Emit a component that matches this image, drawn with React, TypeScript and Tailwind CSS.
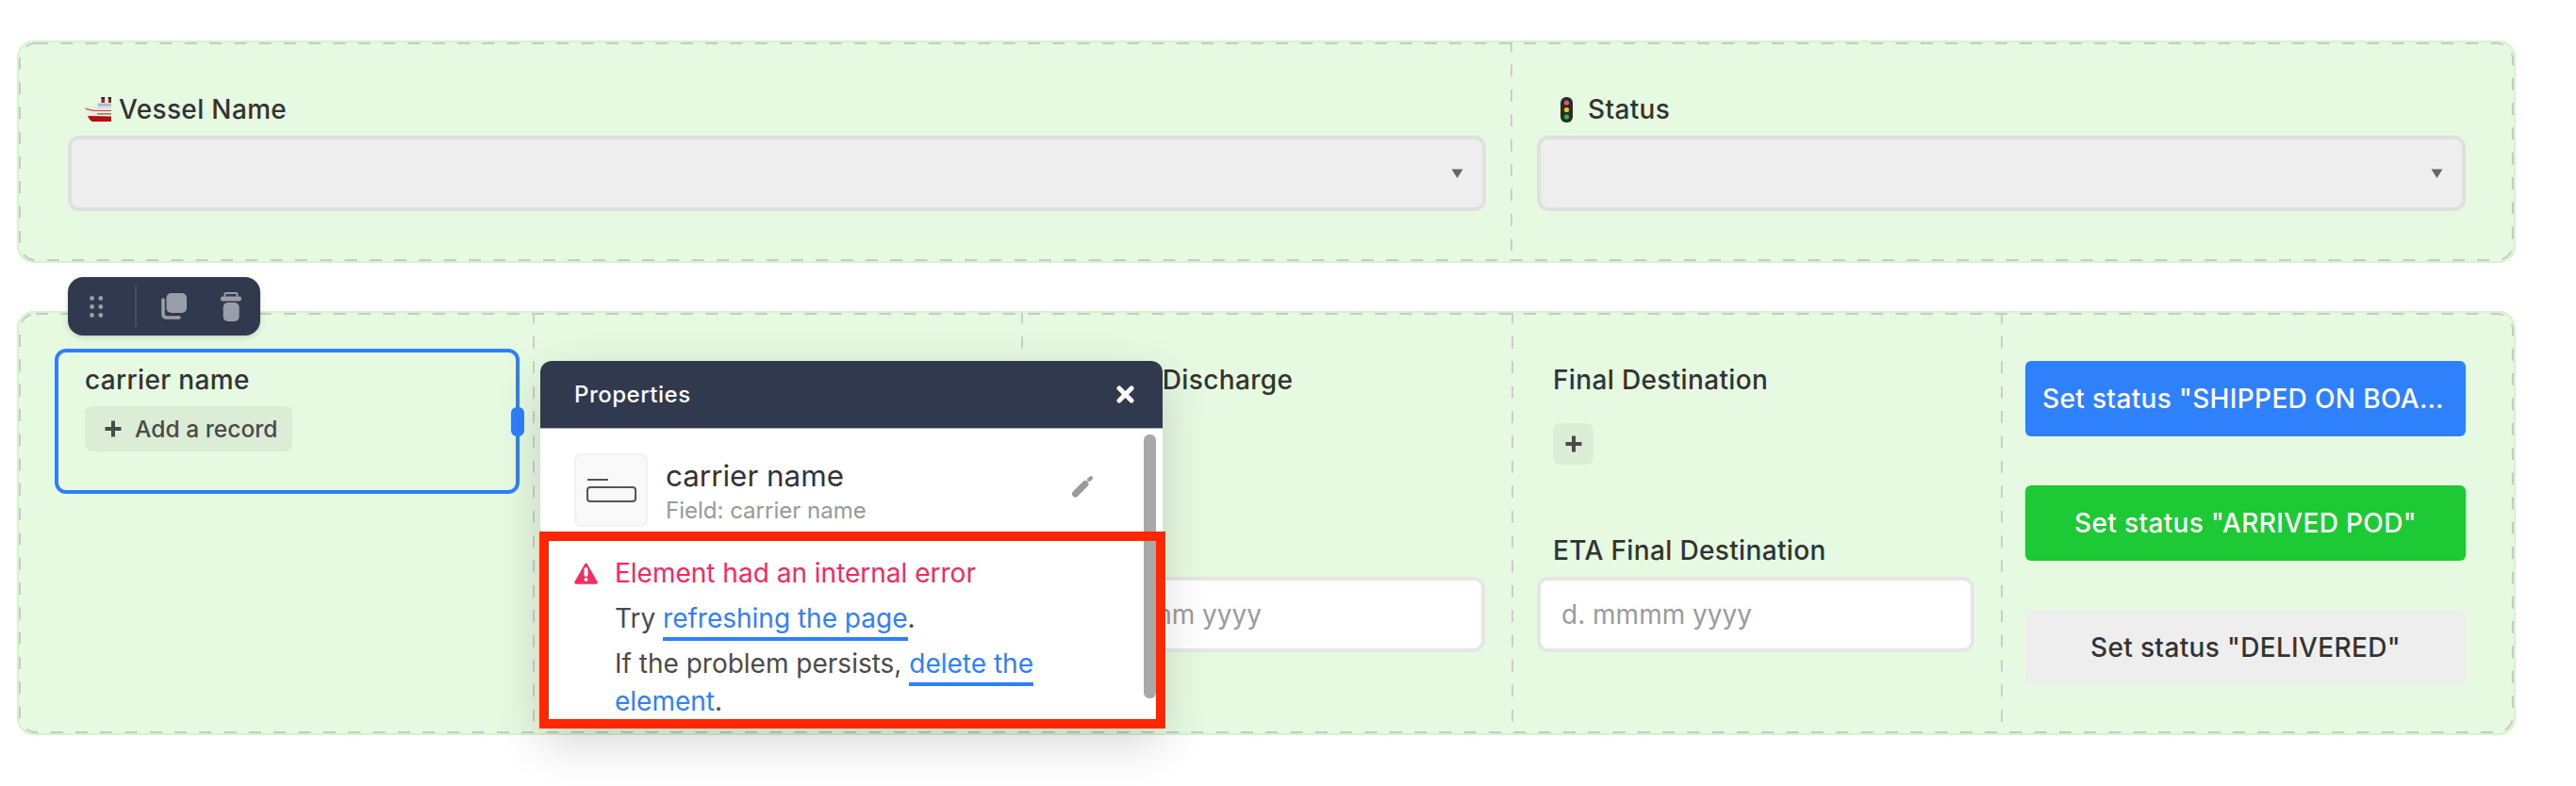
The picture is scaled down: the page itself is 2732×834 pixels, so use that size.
import React from "react";

const font = "font-['Inter','Liberation_Sans',sans-serif]";

const DashedFrame: React.FC = () => (
  <svg className="absolute inset-0 h-full w-full pointer-events-none overflow-visible">
    <rect
      className="w-[calc(100%-2px)] h-[calc(100%-2px)]"
      x="1"
      y="1"
      rx="17"
      fill="none"
      stroke="#c9c9c9"
      strokeWidth="2"
      strokeDasharray="13 13.3"
    />
  </svg>
);

const ShipIcon = () => (
  <svg width="28" height="26" viewBox="0 0 28 26" className="shrink-0">
    <rect x="17.5" y="0" width="3.6" height="7" fill="#a81f1f" />
    <rect x="24.8" y="0" width="3.2" height="7" fill="#a81f1f" />
    <rect x="17.5" y="0" width="3.6" height="2" fill="#2b2b2b" />
    <rect x="24.8" y="0" width="3.2" height="2" fill="#2b2b2b" />
    <rect x="13" y="6" width="15" height="5" fill="#d4dadd" />
    <rect x="14" y="7.5" width="14" height="1.6" fill="#8fb3cc" />
    <rect x="10" y="11" width="18" height="4" fill="#e4e4de" />
    <path d="M0 11.5 L10 13.5 H28 V21 H3 Z" fill="#f3ead9" />
    <path d="M0 11.5 L10 14 H28 V15 H9 L1 13 Z" fill="#c5473f" />
    <rect x="13" y="17" width="15" height="1.6" fill="#8d8573" />
    <path d="M3 20 L28 20.5 V26 H8 Q5 25 3 20 Z" fill="#b30f14" />
  </svg>
);

const TrafficIcon = () => (
  <svg width="13" height="27" viewBox="0 0 13 27" className="shrink-0">
    <rect x="0" y="0" width="13" height="27" rx="6" fill="#2b2b2b" />
    <circle cx="6.5" cy="6" r="2.6" fill="#f0506e" />
    <circle cx="6.5" cy="13.5" r="2.6" fill="#f7c600" />
    <circle cx="6.5" cy="21" r="2.6" fill="#1fc42f" />
  </svg>
);

const Caret = () => (
  <svg width="13" height="10" viewBox="0 0 13 10" className="shrink-0">
    <path d="M0.5 0.5 H12.5 L6.5 10 Z" fill="#666666" />
  </svg>
);

const PlusIcon = ({ className }: { className: string }) => (
  <svg viewBox="0 0 18 18" className={className}>
    <path d="M7 0.5 H11 V7 H17.5 V11 H11 V17.5 H7 V11 H0.5 V7 H7 Z" fill="#4a4a4a" />
  </svg>
);

const Label: React.FC<{ children: React.ReactNode; className?: string }> = ({ children, className }) => (
  <div className={`flex items-center h-10 text-[28px] leading-10 font-medium tracking-[0.35px] text-[#333333] whitespace-nowrap ${className ?? ""}`}>
    {children}
  </div>
);

const SelectBox = () => (
  <div className="flex items-center justify-end h-20 pr-5 rounded-xl border-4 border-[#e0e0e0] bg-[#eeeeee]">
    <Caret />
  </div>
);

const DateInput = () => (
  <div className="flex items-center h-20 pl-[22px] rounded-xl border-4 border-[#e6e6e6] bg-white text-[28px] text-[#9b9b9b] whitespace-nowrap">
    d. mmmm yyyy
  </div>
);

const divider = "bg-[linear-gradient(#cccccc_50%,transparent_50%)] bg-[length:2px_26.4px] bg-repeat-y bg-left";

const Toolbar = () => (
  <div className="absolute left-[52px] top-[-38px] z-10 flex items-center w-[204px] h-[62px] rounded-2xl bg-[#30394e] shadow-[0_2px_6px_rgba(0,0,0,0.15)]">
    <div className="w-[71px] pl-[23px]">
      <svg width="15" height="23" viewBox="0 0 15 23" className="block">
        {[2.5, 11.5, 20.5].map((y) => (
          <g key={y} fill="#9a9ea8">
            <circle cx="2.5" cy={y} r="2.4" />
            <circle cx="11.8" cy={y} r="2.4" />
          </g>
        ))}
      </svg>
    </div>
    <div className="w-0.5 h-[44px] bg-[#464e62]" />
    <div className="flex flex-1 items-center pl-[26px] gap-[36px]">
      <svg width="27" height="28" viewBox="0 0 27 28">
        <rect x="5.5" y="0" width="21.5" height="21" rx="5" fill="#9a9ea8" />
        <path d="M2 7 V22 Q2 26 6 26 H19" fill="none" stroke="#9a9ea8" strokeWidth="3.6" strokeLinecap="round" />
      </svg>
      <svg width="22" height="31" viewBox="0 0 22 31">
        <path d="M4.5 4.5 V2 Q4.5 1 5.5 1 H16.5 Q17.5 1 17.5 2 V4.5" fill="none" stroke="#9a9ea8" strokeWidth="2" />
        <rect x="0" y="4.5" width="22" height="5" rx="2" fill="#9a9ea8" />
        <rect x="2.7" y="11" width="17" height="20" rx="5" fill="#9a9ea8" />
      </svg>
    </div>
  </div>
);

const PropertiesPanel = () => (
  <div className="absolute left-[553px] top-[51px] z-20 w-[660px] h-[387px] rounded-t-xl bg-white shadow-[0_18px_50px_rgba(0,0,0,0.16)]">
    <div className="flex items-center justify-between h-[72px] pl-9 pr-[30px] rounded-t-xl bg-[#30394e] border-b border-[#a9adb6]">
      <span className="text-[24px] font-medium tracking-[0.5px] text-white">Properties</span>
      <svg width="19" height="19" viewBox="0 0 19 19">
        <path d="M3 3 L16 16 M16 3 L3 16" stroke="#ffffff" strokeWidth="5" strokeLinecap="round" />
      </svg>
    </div>
    <div className="absolute right-[7px] top-[78px] bottom-[29px] w-[13px] rounded-md bg-[#a8a8a8]" />
    <div className="flex items-start pl-[36px] pt-[26px]">
      <div className="flex flex-col justify-center shrink-0 w-[78px] h-[78px] pl-[11px] rounded-lg border-2 border-[#f1f1f1] bg-[#f9f9f9]">
        <div className="w-[22px] h-0.5 mb-1.5 ml-[1px] bg-[#555555]" />
        <div className="w-[53px] h-[17px] rounded-[4px] border-2 border-[#555555]" />
      </div>
      <div className="ml-[19px] w-[413px]">
        <div className="text-[31.4px] leading-10 text-[#333333] mt-[4px]">carrier name</div>
        <div className="text-[24px] leading-8 text-[#999999] mt-[1px]">Field: carrier name</div>
      </div>
      <svg width="24" height="24" viewBox="0 0 24 24" className="mt-[24px] ml-[17px]">
        <path d="M4.5 19 L15 8.5" stroke="#9a9a9a" strokeWidth="7" strokeLinecap="round" fill="none" />
        <path d="M19 4 L21 2.2" stroke="#9a9a9a" strokeWidth="4" strokeLinecap="round" fill="none" />
      </svg>
    </div>
    <div className="flex pl-[36px] pt-[29px]">
      <svg width="25" height="23" viewBox="0 0 25 23" className="shrink-0 mt-[9px]">
        <path d="M12.5 2.5 L23 21 H2 Z" fill="#f72b60" stroke="#f72b60" strokeWidth="3.5" strokeLinejoin="round" />
        <path d="M12.5 7 V13" stroke="#ffffff" strokeWidth="4" strokeLinecap="round" />
        <circle cx="12.5" cy="18" r="2" fill="#ffffff" />
      </svg>
      <div className="ml-[18px] w-[490px]">
        <div className="text-[28px] leading-10 text-[#f5285f] whitespace-nowrap">Element had an internal error</div>
        <p className="mt-2 text-[28px] leading-10 text-[#4a4a4a]">
          Try <a className="text-[#2f7ffb] pb-[3px] border-b-4 border-[#2f7ffb]">refreshing the page</a>.
        </p>
        <p className="mt-2 text-[28px] leading-10 text-[#4a4a4a]">
          If the problem persists, <a className="text-[#2f7ffb] pb-[3px] border-b-4 border-[#2f7ffb]">delete the element</a>.
        </p>
      </div>
    </div>
    <div className="absolute left-[-1px] top-[181px] w-[664px] h-[209px] border-10 border-[#ff2600]" />
  </div>
);

export default function App() {
  return (
    <div className={`${font} min-h-[834px] bg-white pt-[43px] pl-[18px] w-[2732px]`}>
      <section className="relative w-[2650px] h-[236px] rounded-[18px] border-2 border-[#d3f5ca] bg-[#e6f9e1] grid grid-cols-[1582px_minmax(0,1fr)]">
        <DashedFrame />
        <div className="pl-[52px] pr-[26px] pt-[51px]">
          <Label className="pl-[18px] gap-2 mb-2">
            <ShipIcon />
            Vessel Name
          </Label>
          <SelectBox />
        </div>
        <div className={`pl-7 pr-[51px] pt-[51px] ${divider}`}>
          <Label className="pl-[25px] gap-[16px] mb-2">
            <TrafficIcon />
            Status
          </Label>
          <SelectBox />
        </div>
      </section>

      <section className="relative mt-[51px] w-[2650px] h-[450px] rounded-[18px] border-2 border-[#d3f5ca] bg-[#e6f9e1] grid grid-cols-[545px_518px_520px_519px_minmax(0,1fr)]">
        <DashedFrame />
        <Toolbar />
        <div className="relative pl-[38px] pr-[14px] pt-[38px]">
          <div className="relative h-[154px] pl-7 pt-[9px] rounded-xl border-4 border-[#2f7ffb]">
            <Label>carrier name</Label>
            <div className="flex items-center mt-2 w-[220px] h-12 pl-[21px] gap-[14px] rounded-lg bg-[#dcedd6] text-[24.6px] font-medium text-[#4a4a4a] whitespace-nowrap">
              <PlusIcon className="w-[18px] h-[18px] shrink-0" />
              Add a record
            </div>
            <div className="absolute right-[-9px] top-[58px] w-[14px] h-[31px] rounded-md bg-[#2f7ffb]" />
          </div>
        </div>
        <div className={divider} />
        <div className={`pl-[27px] pr-[28px] pt-[51px] ${divider}`}>
          <Label className="pl-[22px]">Port of Discharge</Label>
          <div className="h-[189px]" />
          <DateInput />
        </div>
        <div className={`pl-[27px] pr-[28px] pt-[51px] ${divider}`}>
          <Label className="pl-[17px]">Final Destination</Label>
          <div className="flex items-center justify-center ml-[17px] mt-[26px] w-[43px] h-11 rounded-lg bg-[#dcedd6]">
            <PlusIcon className="w-[18px] h-[18px]" />
          </div>
          <Label className="pl-[17px] mt-[71px] mb-2">ETA Final Destination</Label>
          <DateInput />
        </div>
        <div className={`flex flex-col gap-[52px] pl-[26px] pr-[51px] pt-[51px] ${divider}`}>
          <div className="h-20 px-[18px] rounded-md bg-[#2f80fb] text-[28px] leading-20 font-medium tracking-[0.35px] text-white text-center truncate">
            Set status "SHIPPED ON BOARD"
          </div>
          <div className="h-20 px-[18px] rounded-md bg-[#1dc934] text-[28px] leading-20 font-medium tracking-[0.35px] text-white text-center truncate">
            Set status "ARRIVED POD"
          </div>
          <div className="h-20 px-[18px] rounded-md bg-[#eeeeee] text-[28px] leading-20 font-medium tracking-[0.35px] text-[#333333] text-center truncate">
            Set status "DELIVERED"
          </div>
        </div>
        <PropertiesPanel />
      </section>
    </div>
  );
}
